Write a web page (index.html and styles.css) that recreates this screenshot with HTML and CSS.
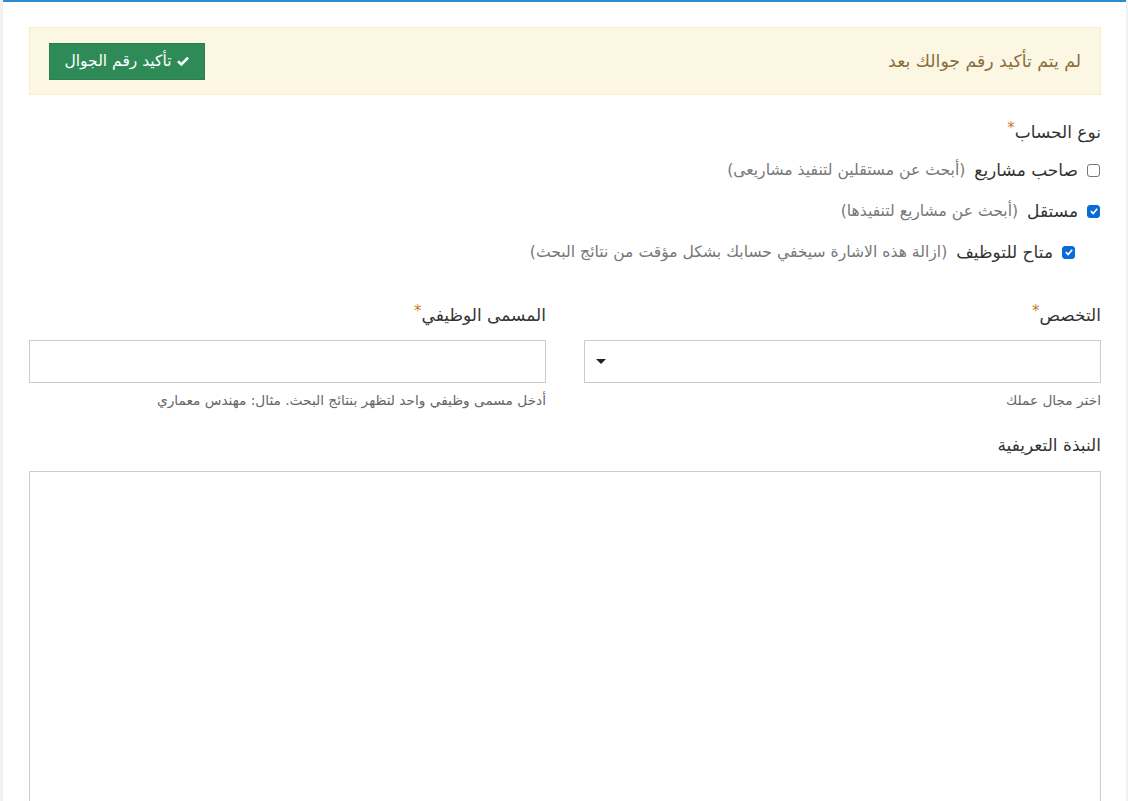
FILE: index.html
```html
<!DOCTYPE html>
<html lang="ar" dir="rtl">
<head>
<meta charset="utf-8">
<title>الملف الشخصي</title>
<link rel="stylesheet" href="styles.css">
</head>
<body>
<div class="panel">
  <div class="alert">
    <span class="alert-text">لم يتم تأكيد رقم جوالك بعد</span>
    <button class="btn-green" type="button">
      <svg class="check" viewBox="0 0 12 10" width="12" height="10"><path d="M1 5.2 L4.4 8.4 L11 1.6" fill="none" stroke="#fff" stroke-width="2.6" stroke-linejoin="miter"/></svg>
      تأكيد رقم الجوال
    </button>
  </div>

  <div class="group">
    <div class="label">نوع الحساب<span class="req">*</span></div>
    <label class="check-row">
      <span class="box"></span>
      <span class="opt">صاحب مشاريع</span>
      <span class="hint">(أبحث عن مستقلين لتنفيذ مشاريعى)</span>
    </label>
    <label class="check-row">
      <span class="box on"><svg viewBox="0 0 12 12" width="10" height="10"><path d="M2.2 6.2 L5 9 L9.8 3.2" fill="none" stroke="#fff" stroke-width="2"/></svg></span>
      <span class="opt">مستقل</span>
      <span class="hint">(أبحث عن مشاريع لتنفيذها)</span>
    </label>
    <label class="check-row sub">
      <span class="box on"><svg viewBox="0 0 12 12" width="10" height="10"><path d="M2.2 6.2 L5 9 L9.8 3.2" fill="none" stroke="#fff" stroke-width="2"/></svg></span>
      <span class="opt">متاح للتوظيف</span>
      <span class="hint">(ازالة هذه الاشارة سيخفي حسابك بشكل مؤقت من نتائج البحث)</span>
    </label>
  </div>

  <div class="cols">
    <div class="field">
      <div class="label">التخصص<span class="req">*</span></div>
      <div class="control select"><span class="caret"></span></div>
      <div class="help">اختر مجال عملك</div>
    </div>
    <div class="field">
      <div class="label">المسمى الوظيفي<span class="req">*</span></div>
      <div class="control"></div>
      <div class="help">أدخل مسمى وظيفي واحد لتظهر بنتائج البحث. مثال: مهندس معماري</div>
    </div>
  </div>

  <div class="field bio">
    <div class="label">النبذة التعريفية</div>
    <div class="textarea"></div>
  </div>
</div>
</body>
</html>
```

FILE: styles.css
```css
html, body {
  margin: 0;
  padding: 0;
}
body {
  background: #f1f1f1;
  font-family: "DejaVu Sans", "Noto Sans", sans-serif;
  color: #333;
  height: 801px;
  overflow: hidden;
}
.panel {
  background: #fff;
  border-top: 2px solid #2a8bcf;
  margin: 0 2px 0 3px;
  padding: 25px 25px 0 26px;
  min-height: 820px;
  box-sizing: border-box;
}
.alert {
  display: flex;
  align-items: center;
  justify-content: space-between;
  background: #fcf7e3;
  border: 1px solid #faebcc;
  padding: 14px 19px;
  height: 68px;
  box-sizing: border-box;
}
.alert-text {
  color: #8a6d3b;
  font-size: 17.3px;
}
.btn-green {
  background: #2e8b57;
  border: 1px solid #2a7f50;
  color: #fff;
  font-family: inherit;
  font-size: 15.5px;
  height: 37px;
  width: 156px;
  display: flex;
  align-items: center;
  justify-content: center;
  gap: 6px;
  padding: 0;
}
.group {
  margin-top: 24px;
}
.label {
  font-size: 17px;
  line-height: 26px;
  color: #333;
}
.req {
  color: #c77b22;
  position: relative;
  top: -5px;
  font-size: 15px;
}
.check-row {
  display: flex;
  align-items: center;
  gap: 9px;
  height: 28px;
  margin-top: 10px;
}
.check-row + .check-row {
  margin-top: 13px;
}
.check-row.sub {
  padding-right: 25px;
}
.box {
  width: 13px;
  height: 13px;
  border: 1px solid #767676;
  border-radius: 3px;
  box-sizing: border-box;
  display: flex;
  align-items: center;
  justify-content: center;
  margin-right: 1px;
}
.box.on {
  background: #0a6ad8;
  border-color: #0a6ad8;
}
.opt {
  font-size: 17px;
  color: #333;
}
.hint {
  font-size: 15.6px;
  color: #777;
}
.cols {
  display: grid;
  grid-template-columns: 1fr 1fr;
  column-gap: 38px;
  margin-top: 36px;
}
.field .label {
  margin-bottom: 11px;
}
.control {
  height: 43px;
  border: 1px solid #ccc;
  box-sizing: border-box;
  display: flex;
  align-items: center;
  justify-content: flex-end;
  padding-left: 11px;
}
.caret {
  width: 0;
  height: 0;
  border-left: 5px solid transparent;
  border-right: 5px solid transparent;
  border-top: 5px solid #222;
}
.help {
  font-size: 13.7px;
  color: #666;
  margin-top: 9px;
  line-height: 16px;
}
.bio {
  margin-top: 24px;
}
.bio .label {
  margin-bottom: 13px;
}
.textarea {
  height: 340px;
  border: 1px solid #ccc;
}
```
